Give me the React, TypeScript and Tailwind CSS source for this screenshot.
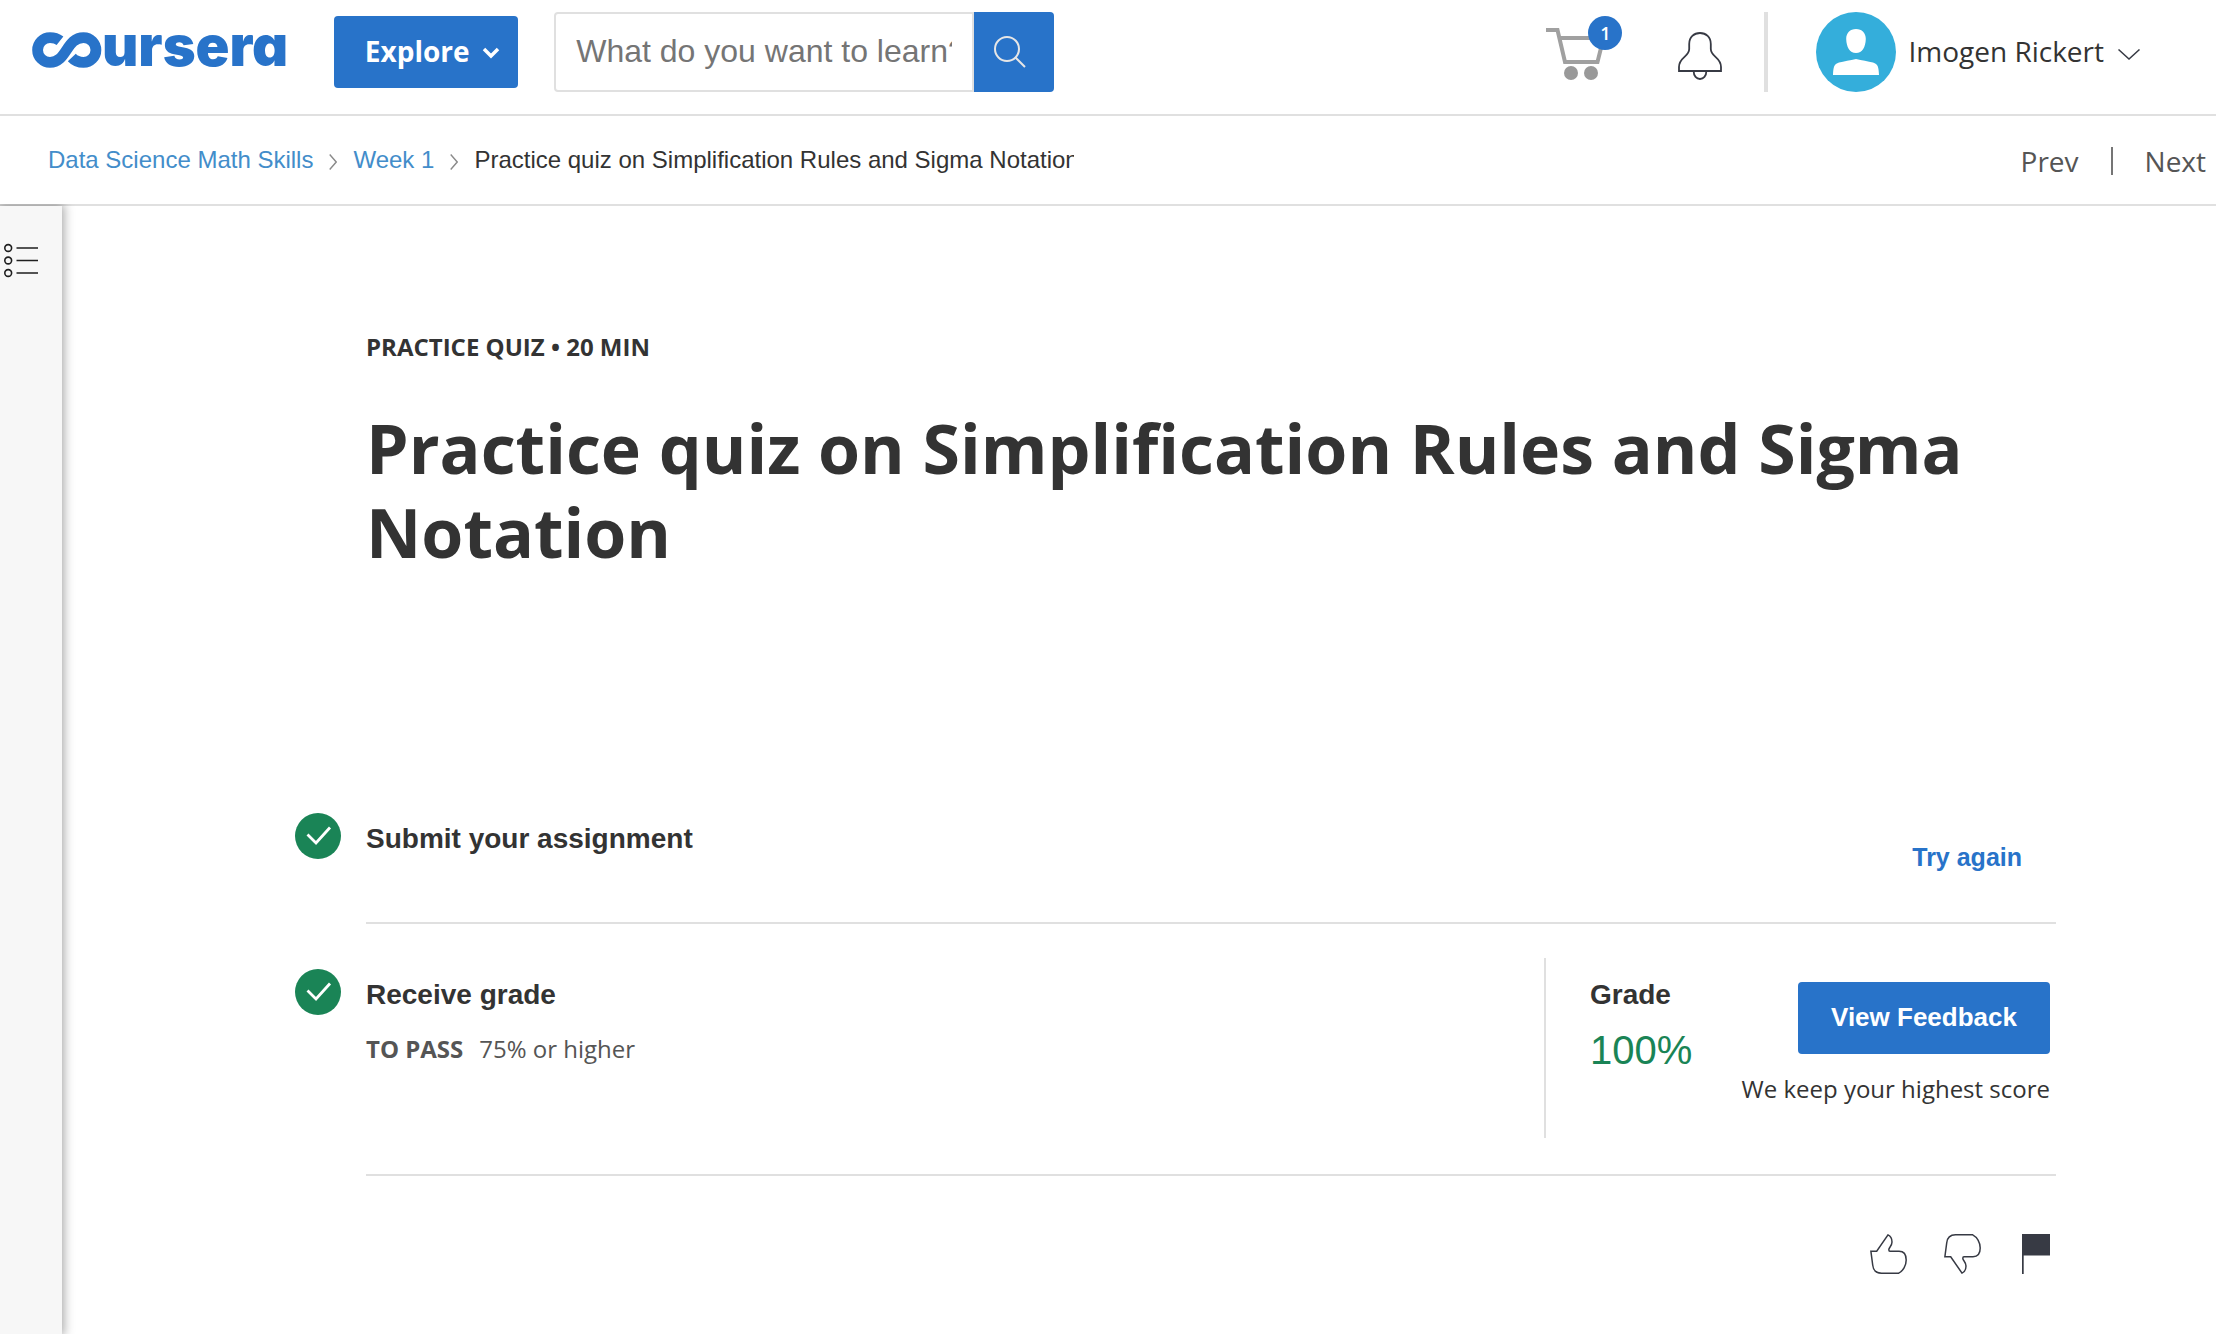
import React from "react";

function Logo() {
  return (
    <a href="#home" aria-label="Coursera" className="mt-1 flex h-[60px] shrink-0 items-baseline text-[#2873c9]">
      <svg width="70" height="34" viewBox="0 0 70 34" fill="none" stroke="currentColor" strokeWidth="10.800" className="overflow-visible">
        <path d="M28 8.800C25.500 6.800 22 5.600 18 5.600A12.400 12.400 0 0 0 18 30.400C35 30.400 34 5.600 51.500 5.600A12.400 12.400 0 0 1 51.500 30.400C47 30.400 43 29 39.800 25.500" />
      </svg>
      <span className="font-['Inter',sans-serif] text-[56px] leading-[60px] font-black [font-feature-settings:'cv11']">
        ursera
      </span>
    </a>
  );
}

function CartIcon() {
  return (
    <svg width="76" height="64" viewBox="0 0 76 64" fill="none" stroke="#a0a0a0" strokeWidth="4">
      <path d="M0 14H11.5L19 46H51.5L59 16M14 22H59" />
      <circle cx="25" cy="57" r="7" fill="#999" stroke="none" />
      <circle cx="45" cy="57" r="7" fill="#999" stroke="none" />
    </svg>
  );
}

function BellIcon() {
  return (
    <svg width="44" height="48" viewBox="0 0 44 48" fill="none" stroke="#373a44" strokeWidth="1.8">
      <path d="M1 39V35C1 25 11.2 25 11.2 17V12C11.2 5 16 1 22 1S32.800 5 32.800 12V17C32.800 25 43 25 43 35V39Z" />
      <path d="M15.700 39.500C15.700 44 18.500 47 22 47S28.300 44 28.300 39.500" />
    </svg>
  );
}

function Avatar() {
  return (
    <svg width="80" height="80" viewBox="0 0 80 80" className="shrink-0">
      <circle cx="40" cy="40" r="40" fill="#34aedb" />
      <path
        fill="#fff"
        d="M40 17C46 17 49.800 21 49.800 27C49.500 35 46.500 41 40 41S30.500 35 30.200 27C30.200 21 34 17 40 17ZM17 63C17.300 55 18 52 23 50.500C28 49.300 34 48.500 40 47C46 48.500 52 49.300 57 50.500C62 52 62.700 55 63 63Z"
      />
    </svg>
  );
}

function Crumb() {
  return (
    <svg width="8" height="16" viewBox="0 0 8 16" fill="none" stroke="#8a8a8a" strokeWidth="1.4" className="mx-4 mt-1 shrink-0">
      <path d="M.7.5L7.200 8L.7 15.500" />
    </svg>
  );
}

function CheckBadge() {
  return (
    <svg width="46" height="46" viewBox="0 0 46 46" className="shrink-0">
      <circle cx="23" cy="23" r="23" fill="#1a8456" />
      <path d="M12.500 21.500L21 30L35 14.500" fill="none" stroke="#fff" strokeWidth="2.800" />
    </svg>
  );
}

function Thumb({ down = false }: { down?: boolean }) {
  return (
    <svg
      width="37"
      height="40"
      viewBox="0 0 37 40"
      fill="none"
      stroke="#373a44"
      strokeWidth="1.5"
      className={down ? "-scale-y-100" : ""}
    >
      <path d="M18 .9C20.500 2 22 4.500 22 8C22 12 18.800 13.500 18.800 15.800C18.800 16.800 19.300 17.300 20 17.300H29C33.500 17.300 36.200 20.500 36.200 26C36.200 31.500 33 37 28.700 39.200H11.500C6.500 39.200 3.200 36 2.700 31L.9 17.300H6.700Z" />
    </svg>
  );
}

function Header() {
  return (
    <header className="flex h-[116px] border-b-2 border-[#e0e0e0] pt-3 pr-[76px] pl-8">
      <Logo />
      <button className="mt-1 ml-[46px] flex h-[72px] w-[184px] shrink-0 items-center justify-center gap-3 rounded bg-[#2873c9] pb-0.5 pl-3 text-[28px] font-bold text-white">
        Explore
        <svg width="18" height="12" viewBox="0 0 18 12" fill="none" stroke="currentColor" strokeWidth="3.500" className="mt-1">
          <path d="M2 2L9 9L16 2" />
        </svg>
      </button>
      <form className="ml-9 flex h-20 w-[500px]">
        <input
          aria-label="Search"
          placeholder="What do you want to learn?"
          className="min-w-0 flex-1 rounded-l border-2 border-[#e0e0e0] px-5 pb-0.5 font-['Liberation_Sans',sans-serif] text-[32px] placeholder:text-[#757575]"
        />
        <button type="button" aria-label="Submit search" className="flex w-20 items-center justify-center rounded-r bg-[#2873c9] pr-2">
          <svg width="32" height="32" viewBox="0 0 32 32" fill="none" stroke="#e6e6e6" strokeWidth="2">
            <circle cx="13" cy="13" r="12" />
            <path d="M21.500 21.500L31 31" />
          </svg>
        </button>
      </form>
      <div className="ml-auto flex h-20 items-center">
        <a href="#cart" aria-label="Cart, 1 item" className="relative mb-2">
          <CartIcon />
          <span className="absolute top-0 right-0 flex size-[34px] items-center justify-center rounded-full bg-[#2873c9] text-lg font-semibold text-white">
            1
          </span>
        </a>
        <button aria-label="Notifications" className="mt-2 ml-14">
          <BellIcon />
        </button>
        <div className="ml-[42px] h-20 w-1 bg-[#e0e0e0]" />
        <button className="ml-12 flex items-center text-[28px] text-[#333]">
          <Avatar />
          <span className="ml-3 pb-0.5">Imogen Rickert</span>
          <svg width="22" height="11" viewBox="0 0 22 11" fill="none" stroke="#373a44" strokeWidth="1.500" className="mt-1 ml-3.5">
            <path d="M.5.5L11 10L21.500.5" />
          </svg>
        </button>
      </div>
    </header>
  );
}

function SubHeader() {
  return (
    <nav aria-label="Breadcrumb" className="flex h-[90px] items-center justify-between border-b-2 border-[#e0e0e0] pr-2.5 pl-12">
      <ol className="flex w-[1026px] items-center overflow-hidden font-['Liberation_Sans',sans-serif] text-2xl whitespace-nowrap text-[#333]">
        <li className="flex items-center">
          <a href="#course" className="text-[#438dca]">Data Science Math Skills</a>
          <Crumb />
        </li>
        <li className="flex items-center">
          <a href="#week" className="text-[#438dca]">Week 1</a>
          <Crumb />
        </li>
        <li>Practice quiz on Simplification Rules and Sigma Notation</li>
      </ol>
      <div className="mt-0.5 flex items-center text-[28px] text-[#555]">
        <a href="#prev">Prev</a>
        <span className="mx-8 h-7 w-0.5 bg-[#757575]" />
        <a href="#next">Next</a>
      </div>
    </nav>
  );
}

export default function App() {
  return (
    <div className="flex min-h-screen flex-col overflow-x-hidden bg-white font-['Open_Sans',sans-serif] text-[#333]">
      <Header />
      <SubHeader />
      <div className="flex flex-1">
        <aside className="w-[62px] shrink-0 bg-[#f7f7f7] pt-9 pl-1 shadow-[0_0_10px_2px_rgba(0,0,0,0.35)] [clip-path:inset(-2px_-20px_0_0)]">
          <button aria-label="Course outline">
            <svg width="34" height="36" viewBox="0 0 34 36" fill="none" stroke="#1f1f1f" strokeWidth="1.600">
              <circle cx="4.200" cy="6" r="3.400" />
              <circle cx="4.200" cy="18.500" r="3.400" />
              <circle cx="4.200" cy="31" r="3.400" />
              <path d="M12.500 6H34M12.500 18.500H34M12.500 31H34" />
            </svg>
          </button>
        </aside>
        <main className="min-w-0 flex-1 pt-[123px] pr-40 pl-[233px]">
          <div className="pl-[71px]">
            <p className="text-2xl leading-9 font-bold">PRACTICE QUIZ • 20 MIN</p>
            <h1 className="mt-[41px] text-[68px] leading-[84px] font-bold">
              Practice quiz on Simplification Rules and Sigma Notation
            </h1>
          </div>

          <section className="mt-[239px] flex gap-[25px]">
            <CheckBadge />
            <div className="flex h-[111px] flex-1 justify-between border-b-2 border-[#e0e0e0] pr-[34px]">
              <h2 className="pt-2 font-['Liberation_Sans',sans-serif] text-[28px] leading-9 font-bold">Submit your assignment</h2>
              <a href="#retry" className="pt-7 font-['Liberation_Sans',sans-serif] text-[25px] leading-8 font-bold text-[#2873c9]">
                Try again
              </a>
            </div>
          </section>

          <section className="flex gap-[25px]">
            <div className="pt-[45px]">
              <CheckBadge />
            </div>
            <div className="flex flex-1 justify-between border-b-2 border-[#e0e0e0] pt-[34px] pb-9">
              <div className="pt-[19px]">
                <h2 className="font-['Liberation_Sans',sans-serif] text-[28px] leading-9 font-bold">Receive grade</h2>
                <p className="mt-[18px] text-2xl leading-9 text-[#555]">
                  <strong className="mr-4">TO PASS</strong>75% or higher
                </p>
              </div>
              <div className="flex h-[180px] w-[512px] justify-between border-l-2 border-[#e0e0e0] pr-1.5 pl-11">
                <div className="pt-[19px] font-['Liberation_Sans',sans-serif]">
                  <h3 className="text-[28px] leading-9 font-bold">Grade</h3>
                  <p className="mt-[15px] text-[40px] leading-11 text-[#1a8456]">100%</p>
                </div>
                <div className="flex flex-col items-end pt-6">
                  <button className="h-[72px] w-[252px] rounded bg-[#2873c9] pb-0.5 font-['Liberation_Sans',sans-serif] text-[26px] font-bold text-white">
                    View Feedback
                  </button>
                  <p className="mt-[17px] text-2xl leading-9">We keep your highest score</p>
                </div>
              </div>
            </div>
          </section>

          <div className="mt-[58px] flex justify-end pr-1.5">
            <button aria-label="Like">
              <Thumb />
            </button>
            <button aria-label="Dislike" className="ml-[37px]">
              <Thumb down />
            </button>
            <button aria-label="Report an issue" className="ml-[41px]">
              <svg width="28" height="40" viewBox="0 0 28 40" fill="#373a44">
                <path d="M0 0H28V21.500H1.700V40H0Z" />
              </svg>
            </button>
          </div>
        </main>
      </div>
    </div>
  );
}
